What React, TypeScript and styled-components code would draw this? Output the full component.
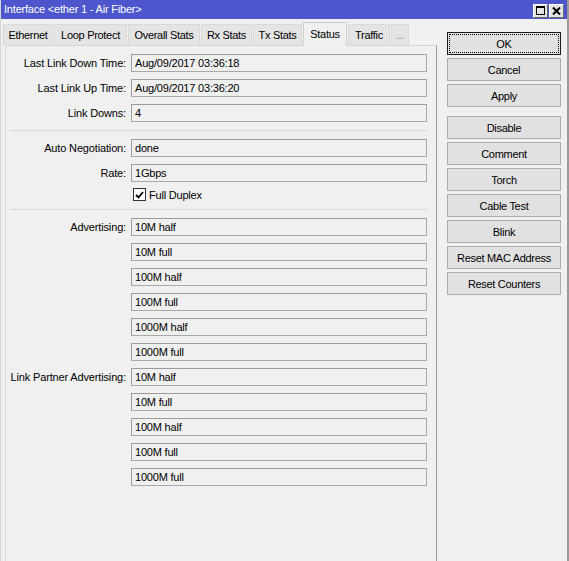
import React from "react";
import styled, { createGlobalStyle, css } from "styled-components";

const GlobalStyle = createGlobalStyle`
  html, body {
    margin: 0;
    padding: 0;
    background: #f0f0f0;
  }
  body {
    font-family: "Liberation Sans", Arial, sans-serif;
    font-size: 11px;
    color: #000;
  }
  * { box-sizing: border-box; }
`;

const Window = styled.div`
  width: 569px;
  height: 561px;
  display: flex;
  flex-direction: column;
  overflow: hidden;
  background: #f0f0f0;
  border-left: 1px solid #d6d6d6;
  border-right: 2px solid #9a9a9a;
`;

const TitleBar = styled.div`
  height: 19px;
  flex: 0 0 19px;
  background: #4d56cc;
  display: flex;
  align-items: center;
  justify-content: space-between;
  padding: 0 5px 0 4px;
  margin-left: -1px;
  margin-right: -2px;
`;

const TitleText = styled.span`
  color: #fff;
  font-size: 11px;
  letter-spacing: -0.2px;
  line-height: 19px;
`;

const TitleButtons = styled.div`
  display: flex;
  gap: 1px;
  margin-top: 2px;
`;

const TitleButton = styled.div`
  width: 15px;
  height: 14px;
  background: #e4e4e4;
  border: 1px solid;
  border-color: #ffffff #6a6a6a #6a6a6a #ffffff;
  display: flex;
  align-items: center;
  justify-content: center;
`;

const Body = styled.div`
  flex: 1;
  display: flex;
  min-height: 0;
`;

const LeftColumn = styled.div`
  display: flex;
  flex-direction: column;
  padding-left: 2px;
  padding-top: 2px;
`;

const TabBar = styled.div`
  display: flex;
  align-items: flex-end;
  height: 24px;
  position: relative;
  z-index: 1;
`;

const Tab = styled.div<{ $w: number; $active?: boolean; $muted?: boolean }>`
  width: ${(p) => p.$w}px;
  height: 21px;
  margin-right: 1px;
  display: flex;
  align-items: center;
  justify-content: center;
  background: #e4e4e4;
  border: 1px solid #d9d9d9;
  border-bottom: none;
  letter-spacing: -0.3px;
  white-space: nowrap;
  color: ${(p) => (p.$muted ? "#8a8a8a" : "#000")};
  ${(p) =>
    p.$active &&
    css`
      height: 24px;
      margin-bottom: -1px;
      background: #f0f0f0;
      border-color: #cfcfcf;
      padding-bottom: 2px;
    `}
`;

const Panel = styled.div`
  margin-left: 2px;
  width: 432px;
  flex: 1;
  border-top: 1px solid #d4d4d4;
  border-left: 1px solid #dcdcdc;
  border-right: 1px solid #a0a0a0;
  padding: 8px 9px 0 0;
  display: flex;
  flex-direction: column;
`;

const Row = styled.div`
  display: grid;
  grid-template-columns: 120px 296px;
  column-gap: 5px;
  align-items: center;
  height: 18px;
  & + & {
    margin-top: 7px;
  }
`;

const Group = styled.div<{ $gapTop?: boolean }>`
  margin-top: ${(p) => (p.$gapTop ? 7 : 0)}px;
`;

const Label = styled.div`
  text-align: right;
  white-space: nowrap;
  letter-spacing: -0.15px;
`;

const Field = styled.div`
  grid-column: 2;
  height: 18px;
  border: 1px solid #a9a9a9;
  border-top-color: #9c9c9c;
  border-left-color: #9c9c9c;
  background: #f0f0f0;
  padding-left: 3px;
  display: flex;
  align-items: center;
  white-space: nowrap;
  letter-spacing: -0.2px;
`;

const Separator = styled.div`
  height: 1px;
  margin: 8px 0 8px 4px;
  background: #d6d6d6;
`;

const CheckRow = styled.div`
  display: grid;
  grid-template-columns: 120px 296px;
  column-gap: 5px;
  align-items: center;
  height: 13px;
  margin-top: 6px;
`;

const CheckLabel = styled.label`
  grid-column: 2;
  display: flex;
  align-items: center;
  gap: 3px;
  padding-left: 2px;
  letter-spacing: -0.2px;
`;

const CheckBox = styled.span`
  width: 13px;
  height: 13px;
  border: 1px solid #333;
  background: #fff;
  display: flex;
  align-items: center;
  justify-content: center;
`;

const ButtonColumn = styled.div`
  margin-left: 10px;
  margin-top: 13px;
  width: 114px;
  display: flex;
  flex-direction: column;
  gap: 3px;
`;

const Button = styled.div<{ $primary?: boolean; $spaced?: boolean }>`
  height: 23px;
  background: #e1e1e1;
  border: 1px solid #adadad;
  display: flex;
  align-items: center;
  justify-content: center;
  letter-spacing: -0.3px;
  white-space: nowrap;
  ${(p) =>
    p.$primary &&
    css`
      border-color: #1a1a1a;
      outline: 1px dotted #000;
      outline-offset: -3px;
    `}
  ${(p) =>
    p.$spaced &&
    css`
      margin-top: 6px;
    `}
`;

const tabs: { label: string; w: number; active?: boolean; muted?: boolean }[] = [
  { label: "Ethernet", w: 50 },
  { label: "Loop Protect", w: 73 },
  { label: "Overall Stats", w: 72 },
  { label: "Rx Stats", w: 51 },
  { label: "Tx Stats", w: 49 },
  { label: "Status", w: 44, active: true },
  { label: "Traffic", w: 42 },
  { label: "...", w: 18, muted: true },
];

const advertising = ["10M half", "10M full", "100M half", "100M full", "1000M half", "1000M full"];
const partner = ["10M half", "10M full", "100M half", "100M full", "1000M full"];

const buttons = [
  "OK",
  "Cancel",
  "Apply",
  "Disable",
  "Comment",
  "Torch",
  "Cable Test",
  "Blink",
  "Reset MAC Address",
  "Reset Counters",
];

function FieldRow({ label, value }: { label?: string; value: string }) {
  return (
    <Row>
      <Label>{label ? `${label}:` : ""}</Label>
      <Field>{value}</Field>
    </Row>
  );
}

export default function App() {
  return (
    <>
      <GlobalStyle />
      <Window>
        <TitleBar>
          <TitleText>Interface &lt;ether 1 - Air Fiber&gt;</TitleText>
          <TitleButtons>
            <TitleButton>
              <svg width="9" height="9" viewBox="0 0 9 9">
                <rect x="0.5" y="0.5" width="8" height="8" fill="none" stroke="#000" />
                <rect x="0" y="0" width="9" height="2" fill="#000" />
              </svg>
            </TitleButton>
            <TitleButton>
              <svg width="9" height="8" viewBox="0 0 9 8">
                <path d="M1 0.5 L8 7.5 M8 0.5 L1 7.5" stroke="#000" strokeWidth="2" />
              </svg>
            </TitleButton>
          </TitleButtons>
        </TitleBar>
        <Body>
          <LeftColumn>
            <TabBar>
              {tabs.map((t) => (
                <Tab key={t.label} $w={t.w} $active={t.active} $muted={t.muted}>
                  {t.label}
                </Tab>
              ))}
            </TabBar>
            <Panel>
              <FieldRow label="Last Link Down Time" value="Aug/09/2017 03:36:18" />
              <FieldRow label="Last Link Up Time" value="Aug/09/2017 03:36:20" />
              <FieldRow label="Link Downs" value="4" />
              <Separator />
              <FieldRow label="Auto Negotiation" value="done" />
              <FieldRow label="Rate" value="1Gbps" />
              <CheckRow>
                <CheckLabel>
                  <CheckBox>
                    <svg width="9" height="8" viewBox="0 0 9 8">
                      <path d="M1 4 L3.5 6.5 L8 1" fill="none" stroke="#000" strokeWidth="1.8" />
                    </svg>
                  </CheckBox>
                  Full Duplex
                </CheckLabel>
              </CheckRow>
              <Separator />
              <Group>
                {advertising.map((v, i) => (
                  <FieldRow key={"a" + i} label={i === 0 ? "Advertising" : undefined} value={v} />
                ))}
              </Group>
              <Group $gapTop>
                {partner.map((v, i) => (
                  <FieldRow key={"p" + i} label={i === 0 ? "Link Partner Advertising" : undefined} value={v} />
                ))}
              </Group>
            </Panel>
          </LeftColumn>
          <ButtonColumn>
            {buttons.map((b, i) => (
              <Button key={b} $primary={i === 0} $spaced={b === "Disable"}>
                {b}
              </Button>
            ))}
          </ButtonColumn>
        </Body>
      </Window>
    </>
  );
}
